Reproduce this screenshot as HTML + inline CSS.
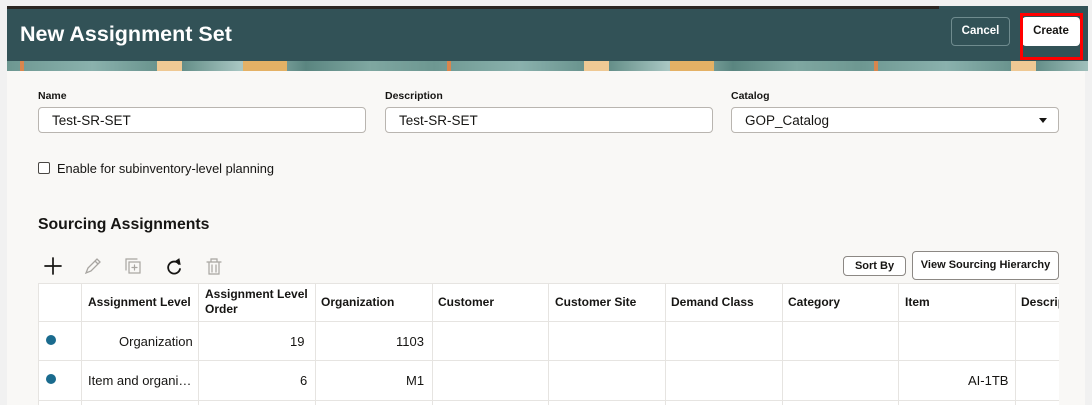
<!DOCTYPE html>
<html><head><meta charset="utf-8"><style>
*{box-sizing:border-box;margin:0;padding:0}
body{width:1092px;height:405px;overflow:hidden;background:#f1f1f1;font-family:"Liberation Sans",sans-serif;color:#161513;position:relative}
.a{position:absolute}
.hdr{left:7px;top:6px;width:1081px;height:55px;background:#325257}
.topline{left:7px;top:6px;width:932px;height:3px;background:#2b2622}
.banner{left:7px;top:61px;width:1081px;height:10px;
background:
linear-gradient(90deg,transparent 0 13px,#d9864d 13px 17px,transparent 17px 100%),
linear-gradient(90deg,transparent 0 150px,#efc994 150px 175px,transparent 175px 236px,#e4b165 236px 280px,transparent 280px 427px),
linear-gradient(90deg,#6d9791,#8ab1ad 20%,#5f8a84 40%,#a9c7c3 55%,#5a8580 70%,#7fa7a1 85%,#6d9791);
background-size:427px 10px,427px 10px,427px 10px}
.content{left:7px;top:71px;width:1078px;height:334px;background:#f9f8f6}
h1{position:absolute;left:20px;top:22px;font-size:21.5px;font-weight:bold;color:#fff}
.btn{position:absolute;border-radius:4px;font-size:11.5px;font-weight:bold;text-align:center}
.lbl{position:absolute;font-size:10.5px;font-weight:bold;top:90px}
.inp{position:absolute;top:107px;height:26px;border:1px solid #b9b5b0;border-radius:4px;background:#fff;font-size:13.5px;padding:5px 13px}
.cell{position:absolute;font-size:13px;white-space:nowrap}
.hd{font-weight:bold;font-size:12px}
.vl{position:absolute;width:1px;background:#e6e4e1;top:283px;height:122px}
.hl{position:absolute;height:1px;background:#e6e4e1;left:38px;width:1021px}
.dot{position:absolute;width:10px;height:10px;border-radius:50%;background:#1a6b8e;left:46px}
</style></head><body>
<div class="a hdr"></div><div class="a topline"></div>
<div class="a banner"></div>
<div class="a content"></div>
<h1>New Assignment Set</h1>
<div class="btn" style="left:951px;top:17px;width:59px;height:29px;border:1px solid #6f8b8e;color:#fff;line-height:27px">Cancel</div>
<div class="btn" style="left:1022px;top:17px;width:58px;height:29px;background:#fff;color:#161513;line-height:29px">Create</div>
<div class="a" style="left:1020px;top:13px;width:63px;height:47px;border:3px solid #f00"></div>

<div class="lbl" style="left:38px">Name</div>
<div class="lbl" style="left:385px">Description</div>
<div class="lbl" style="left:731px">Catalog</div>
<div class="inp" style="left:38px;width:328px">Test-SR-SET</div>
<div class="inp" style="left:385px;width:328px">Test-SR-SET</div>
<div class="inp" style="left:731px;width:328px">GOP_Catalog</div>
<div class="a" style="left:1039px;top:118px;width:0;height:0;border-left:4.5px solid transparent;border-right:4.5px solid transparent;border-top:5px solid #161513"></div>
<div class="a" style="left:38px;top:162px;width:12px;height:12px;border:1px solid #4a4744;border-radius:2px;background:#fff"></div>
<div class="cell" style="left:57px;top:161px;font-size:12.8px">Enable for subinventory-level planning</div>
<div class="cell" style="left:38px;top:216px;font-size:15.8px;font-weight:bold">Sourcing Assignments</div>

<svg class="a" style="left:40px;top:254px" width="190" height="24" viewBox="0 0 190 24" fill="none" stroke-linecap="round">
<path d="M13 4v16M5 12h16" stroke="#161513" stroke-width="1.7"/>
<path d="M46 19l2-5 9-9 3 3-9 9z M55 7l3 3" stroke="#a8a5a1" stroke-width="1.3"/>
<rect x="89" y="8" width="11" height="11" stroke="#a8a5a1" stroke-width="1.2"/><path d="M86 16V5h11M94.5 11v5M92 13.5h5" stroke="#a8a5a1" stroke-width="1.2"/>
<path d="M139 10a6 6 0 1 0 1 5" stroke="#161513" stroke-width="1.8"/><path d="M136 7l4 3-1-5z" fill="#161513" stroke="#161513" stroke-width="1"/>
<path d="M167 8h14M171 8V5h6v3M169 8v12h10V8M172 11v7M176 11v7" stroke="#a8a5a1" stroke-width="1.2"/>
</svg>
<div class="btn" style="left:843px;top:256px;width:63px;height:20px;border:1px solid #8c8884;background:#fff;line-height:18px;font-size:11px">Sort By</div>
<div class="btn" style="left:912px;top:251px;width:147px;height:29px;border:1px solid #8c8884;background:#fff;line-height:27px;font-size:11px">View Sourcing Hierarchy</div>

<div class="a" style="left:38px;top:283px;width:1021px;height:122px;background:#fff"></div>
<div class="hl" style="top:283px"></div><div class="hl" style="top:321px"></div><div class="hl" style="top:360px"></div><div class="hl" style="top:400px"></div>
<div class="vl" style="left:38px"></div><div class="vl" style="left:81px"></div><div class="vl" style="left:198px"></div><div class="vl" style="left:315px"></div><div class="vl" style="left:432px"></div><div class="vl" style="left:548px"></div><div class="vl" style="left:665px"></div><div class="vl" style="left:782px"></div><div class="vl" style="left:898px"></div><div class="vl" style="left:1015px"></div>
<div class="cell hd" style="left:88px;top:295px">Assignment Level</div>
<div class="cell hd" style="left:205px;top:287px;line-height:15px">Assignment Level<br>Order</div>
<div class="cell hd" style="left:321px;top:295px">Organization</div>
<div class="cell hd" style="left:438px;top:295px">Customer</div>
<div class="cell hd" style="left:555px;top:295px">Customer Site</div>
<div class="cell hd" style="left:671px;top:295px">Demand Class</div>
<div class="cell hd" style="left:788px;top:295px">Category</div>
<div class="cell hd" style="left:905px;top:295px">Item</div>
<div class="cell hd" style="left:1021px;top:295px;width:38px;overflow:hidden">Description</div>
<div class="dot" style="top:335px"></div><div class="dot" style="top:374px"></div>
<div class="cell" style="left:119px;top:334px">Organization</div>
<div class="cell" style="left:290px;top:334px">19</div>
<div class="cell" style="left:396px;top:334px">1103</div>
<div class="cell" style="left:88px;top:373px">Item and organi…</div>
<div class="cell" style="left:300px;top:373px">6</div>
<div class="cell" style="left:406px;top:373px">M1</div>
<div class="cell" style="left:968px;top:373px">AI-1TB</div>
</body></html>
